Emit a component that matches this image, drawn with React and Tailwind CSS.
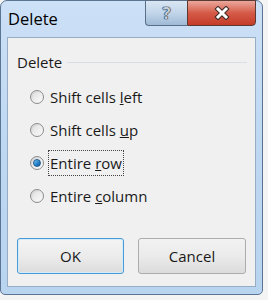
import React from 'react'

const font = { fontFamily: '"Open Sans", "Noto Sans", sans-serif' }

const Radio = ({ checked }) => (
  <span className="w-[14px] h-[14px] rounded-full border border-[#8c8c8c] bg-gradient-to-br from-[#cdcdcd] via-[#ececec] to-[#fbfbfb] flex items-center justify-center shrink-0">
    {checked ? (
      <span className="w-[8px] h-[8px] rounded-full bg-gradient-to-br from-[#7ccaf5] via-[#2b8ad2] to-[#135a99] border border-[#1d5b8f]"></span>
    ) : (
      <span className="w-[8px] h-[8px] rounded-full bg-gradient-to-br from-[#e2e2e2] to-[#f7f7f7]"></span>
    )}
  </span>
)

const Option = ({ checked, focused, children }) => (
  <div className="h-[33px] flex items-center pl-[22px] gap-[5px]">
    <Radio checked={checked} />
    <span className={`text-[15px] leading-[24px] px-[1px] ${focused ? 'outline outline-1 outline-dotted outline-[#444]' : ''}`}>
      {children}
    </span>
  </div>
)

export default function App() {
  return (
    <div className="w-[268px] h-[300px] bg-[#f4f4f4] overflow-hidden" style={font}>
      <div className="w-[263px] h-[295px] rounded-t-[7px] rounded-b-[5px] border border-[#5c7493] bg-gradient-to-b from-[#cce0f6] via-[#bed8f2] to-[#b9d4ef] flex flex-col text-[#1a1a1a]">
        <div className="h-[36px] flex items-start">
          <div className="pl-[7px] pt-[7px] text-[16.5px] leading-[22px] text-black">Delete</div>
          <div className="ml-auto mr-[6px] flex h-[26px] -mt-px">
            <div className="w-[42px] h-full rounded-bl-[4px] border border-[#5b6f88] border-r-0 bg-gradient-to-b from-[#d9e6f3] via-[#c2d5e9] to-[#9fbad6] flex items-center justify-center">
              <span className="text-[16px] font-bold leading-none text-[#c6d0dc]" style={{ textShadow: '0 0 1px #2a3a4d, 0 0 1px #2a3a4d, 0 0 1px #2a3a4d, 0 0 1px #2a3a4d' }}>?</span>
            </div>
            <div className="w-[69px] h-full rounded-br-[4px] border border-[#5b3a33] bg-gradient-to-b from-[#eaa79d] via-[#d45a47] to-[#c43b28] flex items-center justify-center">
              <svg width="18" height="14" viewBox="0 0 18 14">
                <path d="M5 3 L13 11 M13 3 L5 11" stroke="#3b2a28" strokeWidth="5" strokeLinecap="square" />
                <path d="M5 3 L13 11 M13 3 L5 11" stroke="#ffffff" strokeWidth="3" strokeLinecap="square" />
              </svg>
            </div>
          </div>
        </div>
        <div className="ml-[6px] mr-[6px] h-[250px] border border-[#97adc6] bg-[#f0f0f0] flex flex-col pt-[14px]">
          <div className="flex items-center pl-[9px] pr-[8px] h-[20px]">
            <span className="text-[15px] leading-[20px]">Delete</span>
            <div className="flex-1 h-px bg-[#d5dfe5] ml-[5px]"></div>
          </div>
          <div className="mt-[8px] flex flex-col">
            <Option>Shift cells <u>l</u>eft</Option>
            <Option>Shift cells <u>u</u>p</Option>
            <Option checked focused>Entire <u>r</u>ow</Option>
            <Option>Entire <u>c</u>olumn</Option>
          </div>
          <div className="mt-[26px] flex pl-[9px] gap-[14px]">
            <button className="w-[107px] h-[36px] rounded-[3px] border border-[#4a9ad6] bg-gradient-to-b from-[#f4f4f4] via-[#ececec] to-[#dcdcdc] text-[15px] text-[#1a1a1a] shadow-[inset_0_0_0_1px_#d3ecfb]">
              OK
            </button>
            <button className="w-[108px] h-[36px] rounded-[3px] border border-[#acacac] bg-gradient-to-b from-[#f2f2f2] via-[#ebebeb] to-[#dcdcdc] text-[15px] text-[#1a1a1a]">
              Cancel
            </button>
          </div>
        </div>
      </div>
    </div>
  )
}
